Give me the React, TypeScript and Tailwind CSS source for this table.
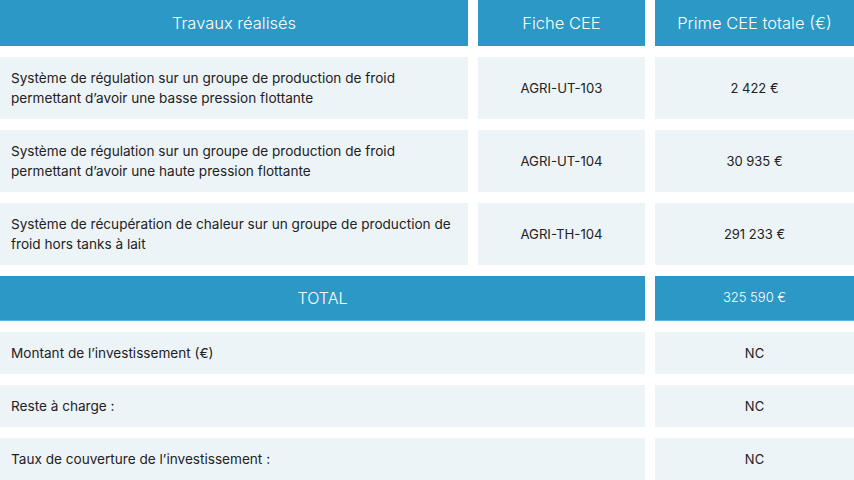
const rows = [
  {
    label: "Système de régulation sur un groupe de production de froid permettant d’avoir une basse pression flottante",
    fiche: "AGRI-UT-103",
    prime: "2 422 €",
  },
  {
    label: "Système de régulation sur un groupe de production de froid permettant d’avoir une haute pression flottante",
    fiche: "AGRI-UT-104",
    prime: "30 935 €",
  },
  {
    label: "Système de récupération de chaleur sur un groupe de production de froid hors tanks à lait",
    fiche: "AGRI-TH-104",
    prime: "291 233 €",
  },
];

const extras = [
  { label: "Montant de l’investissement (€)", value: "NC" },
  { label: "Reste à charge :", value: "NC" },
  { label: "Taux de couverture de l’investissement :", value: "NC" },
];

const App = () => {
  const head = "bg-[#2b98c6] text-white font-light flex items-center justify-center";
  const cell = "bg-[#edf4f8] text-[#222] leading-[20px] flex items-center";

  return (
    <div
      className="w-[854px] h-[480px] bg-white overflow-hidden grid grid-cols-[468px_167px_1fr] gap-x-[10px] gap-y-[11px] grid-rows-[46px_62px_62px_62px_45px_42px_42px_42px]"
      style={{ fontFamily: "Inter, 'Noto Sans', sans-serif" }}
    >
      <div className={`${head} text-[16.5px]`}>Travaux réalisés</div>
      <div className={`${head} text-[16.5px]`}>Fiche CEE</div>
      <div className={`${head} text-[16.5px]`}>Prime CEE totale (€)</div>

      {rows.map((r) => (
        <div key={r.fiche} className="contents">
          <div className={`${cell} text-[13.6px] pl-[11px] pr-[4px]`}>{r.label}</div>
          <div className={`${cell} text-[13.2px] justify-center`}>{r.fiche}</div>
          <div className={`${cell} text-[13px] justify-center`}>{r.prime}</div>
        </div>
      ))}

      <div className={`${head} text-[16px] col-span-2 border-b border-[#5db6d8]`}>TOTAL</div>
      <div className={`${head} text-[13px] border-b border-[#5db6d8]`}>325 590 €</div>

      {extras.map((e) => (
        <div key={e.label} className="contents">
          <div className={`${cell} text-[13.6px] col-span-2 px-[11px]`}>{e.label}</div>
          <div className={`${cell} text-[13px] justify-center`}>{e.value}</div>
        </div>
      ))}
    </div>
  );
};

export default App;
